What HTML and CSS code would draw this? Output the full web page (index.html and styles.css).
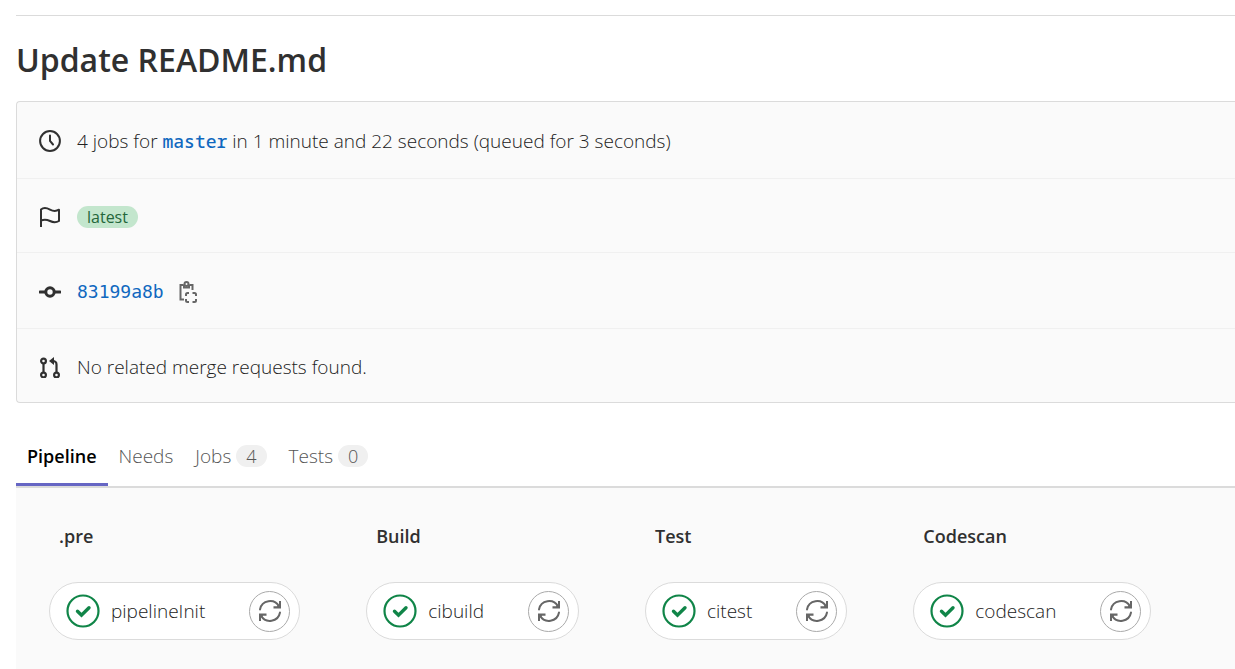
FILE: index.html
```html
<!DOCTYPE html>
<html lang="en">
<head>
    <meta charset="UTF-8">
    <meta name="viewport" content="width=device-width, initial-scale=1.0">
    <title>Update README.md - Pipeline</title>
    <link rel="stylesheet" href="styles.css">
</head>
<body>
    <!-- shared icons -->
    <svg class="hidden" xmlns="http://www.w3.org/2000/svg">
        <symbol id="success" viewBox="0 0 34 34">
            <circle cx="17" cy="17" r="15.5" fill="#fff" stroke="#108548" stroke-width="2.2"/>
            <path d="M11.500 17.200l4 4 7.500-7.500" fill="none" stroke="#108548" stroke-width="3.400" stroke-linecap="round"/>
        </symbol>
        <symbol id="retry" viewBox="0 0 24 24">
            <g fill="none" stroke="#666" stroke-width="2" stroke-linecap="round">
                <path d="M2 10.5A10.2 10.2 0 0 1 21 7.5"/>
                <path d="M22 13.5A10.2 10.2 0 0 1 3 16.5"/>
            </g>
            <path d="M23 2v7.5h-7.5V7.3h3.500L21 5V2zM1 22v-7.500h7.500v2.200H5L3 19v3z" fill="#666"/>
        </symbol>
    </svg>

    <main>
        <h1>Update README.md</h1>

        <section class="info">
            <div class="info-row tall">
                <svg class="icon" viewBox="0 0 22 22">
                    <circle cx="11" cy="11" r="9.900"/>
                    <path d="M11 5.500V11l3 3.500" stroke-linecap="round"/>
                </svg>
                <p>4 jobs for <a href="#" class="ref">master</a> in 1 minute and 22 seconds (queued for 3 seconds)</p>
            </div>
            <div class="info-row">
                <svg class="icon" viewBox="0 0 22 22">
                    <path d="M2 21V3.500C5 1 8 2 11 3.600S17 5.500 20 3.700V15c-3 1.800-6 1.500-9 0s-6-2-9-.4" stroke-linejoin="round"/>
                </svg>
                <span class="label">latest</span>
            </div>
            <div class="info-row tall">
                <svg class="icon commit" viewBox="0 0 22 22">
                    <circle cx="11" cy="11" r="4.200"/>
                    <path d="M1 11h5.500M15.500 11H21" stroke-linecap="round"/>
                </svg>
                <a href="#" class="sha">83199a8b</a>
                <button class="copy" aria-label="Copy commit SHA">
                    <svg viewBox="0 0 18 22">
                        <path d="M5 18.500H1.500V4H4.500M10.500 4h3v5"/>
                        <path d="M5 3.500v3h5v-3"/>
                        <circle cx="7.500" cy="3" r="2"/>
                        <path d="M7 15v-1.500Q7 12 8.500 12H10M13.500 12h2Q17 12 17 13.500V15M17 18v1.500Q17 21 15.500 21h-2M10 21H8.500Q7 21 7 19.500V18"/>
                    </svg>
                </button>
            </div>
            <div class="info-row">
                <svg class="icon merge" viewBox="0 0 22 22">
                    <circle cx="4.500" cy="5" r="2.400"/>
                    <circle cx="4.500" cy="19" r="2.400"/>
                    <circle cx="17.500" cy="19" r="2.400"/>
                    <path d="M4.500 7.500V16.500M17.500 16.500V8.500Q17.500 5 13.500 5"/>
                    <path class="arrow" d="M15 1v8L10 5z"/>
                </svg>
                <p>No related merge requests found.</p>
            </div>
        </section>

        <nav class="tabs">
            <a href="#" class="active">Pipeline</a>
            <a href="#">Needs</a>
            <a href="#">Jobs <span class="badge">4</span></a>
            <a href="#">Tests <span class="badge">0</span></a>
        </nav>

        <section class="graph">
            <div class="stage">
                <h2>.pre</h2>
                <div class="job">
                    <svg class="status"><use href="#success"/></svg>
                    <span>pipelineInit</span>
                    <button class="retry" aria-label="Retry pipelineInit"><svg><use href="#retry"/></svg></button>
                </div>
            </div>
            <div class="stage">
                <h2>Build</h2>
                <div class="job">
                    <svg class="status"><use href="#success"/></svg>
                    <span>cibuild</span>
                    <button class="retry" aria-label="Retry cibuild"><svg><use href="#retry"/></svg></button>
                </div>
            </div>
            <div class="stage">
                <h2>Test</h2>
                <div class="job">
                    <svg class="status"><use href="#success"/></svg>
                    <span>citest</span>
                    <button class="retry" aria-label="Retry citest"><svg><use href="#retry"/></svg></button>
                </div>
            </div>
            <div class="stage">
                <h2>Codescan</h2>
                <div class="job">
                    <svg class="status"><use href="#success"/></svg>
                    <span>codescan</span>
                    <button class="retry" aria-label="Retry codescan"><svg><use href="#retry"/></svg></button>
                </div>
            </div>
        </section>
    </main>
</body>
</html>
```
FILE: styles.css
```css
* {
    box-sizing: border-box;
}
body {
    margin: 0;
    background: #fff;
    color: #222;
    font-family: "Open Sans", "Noto Sans", sans-serif;
    font-size: 19px;
    font-weight: 300;
    line-height: 24px;
}
.hidden {
    display: none;
}
main {
    margin: 15px 0 0 16px;
    border-top: 1px solid #dbdbdb;
    min-height: calc(100vh - 15px);
    display: flex;
    flex-direction: column;
}
h1 {
    margin: 21px 0 19px;
    color: #303030;
    font-size: 32px;
    line-height: 45px;
    font-weight: 600;
}
h2 {
    margin: 0 10px 34px;
    color: #303030;
    font-size: 18px;
    line-height: 24px;
    font-weight: 600;
}
p {
    margin: 0;
}
a {
    color: #1068bf;
    text-decoration: none;
}
button {
    padding: 0;
    background: none;
    border: none;
    cursor: pointer;
}

/* pipeline summary */
.info {
    background: #fafafa;
    border: 1px solid #dbdbdb;
    border-right: none;
    border-radius: 4px 0 0 4px;
}
.info-row {
    display: flex;
    align-items: center;
    height: 74px;
    padding: 2px 22px 0;
}
.info-row + .info-row {
    border-top: 1px solid #f0f0f0;
}
.info-row.tall {
    height: 76px;
}
.icon {
    width: 22px;
    height: 22px;
    margin-right: 16px;
    fill: none;
    stroke: #303030;
    stroke-width: 2;
}
.icon.commit {
    stroke-width: 3;
}
.icon.merge {
    stroke-width: 2.2;
}
.arrow {
    fill: #303030;
    stroke: none;
}
.ref, .sha {
    font-family: "DejaVu Sans Mono", monospace;
    font-size: 18px;
    font-weight: 400;
}
.ref {
    font-family: "Noto Sans Mono", "DejaVu Sans Mono", monospace;
    font-weight: 500;
}
.label {
    padding: 0 10px;
    border-radius: 11px;
    background: #c3e6cd;
    color: #24663b;
    font-size: 16px;
    font-weight: 400;
    line-height: 22px;
}
.copy {
    margin-left: 15px;
}
.copy svg {
    display: block;
    width: 18px;
    height: 22px;
    fill: none;
    stroke: #666;
    stroke-width: 2;
}

/* tabs */
.tabs {
    display: flex;
    margin-top: 40px;
    border-bottom: 2px solid #dbdbdb;
}
.tabs a {
    display: flex;
    align-items: center;
    gap: 5px;
    height: 43px;
    padding: 0 11px 18px;
    color: #555;
}
.tabs .active {
    color: #000;
    font-size: 18px;
    font-weight: 600;
    box-shadow: inset 0 -3px #6666c4;
}
.badge {
    padding: 0 10px;
    border-radius: 11px;
    background: #f0f0f0;
    font-size: 18px;
    line-height: 22px;
}

/* graph */
.graph {
    display: flex;
    flex: 1;
    gap: 66px;
    padding: 36px 33px 29px;
    background: #fafafa;
}
.job {
    display: flex;
    align-items: center;
    height: 58px;
    padding: 0 9px 0 16px;
    background: #fff;
    border: 1px solid #dbdbdb;
    border-radius: 29px;
}
.status {
    width: 34px;
    height: 34px;
    margin-right: 11px;
}
.retry {
    display: flex;
    align-items: center;
    justify-content: center;
    width: 41px;
    height: 41px;
    margin-left: 44px;
    border: 1px solid #aaa;
    border-radius: 50%;
}
.retry svg {
    width: 24px;
    height: 24px;
}
```
